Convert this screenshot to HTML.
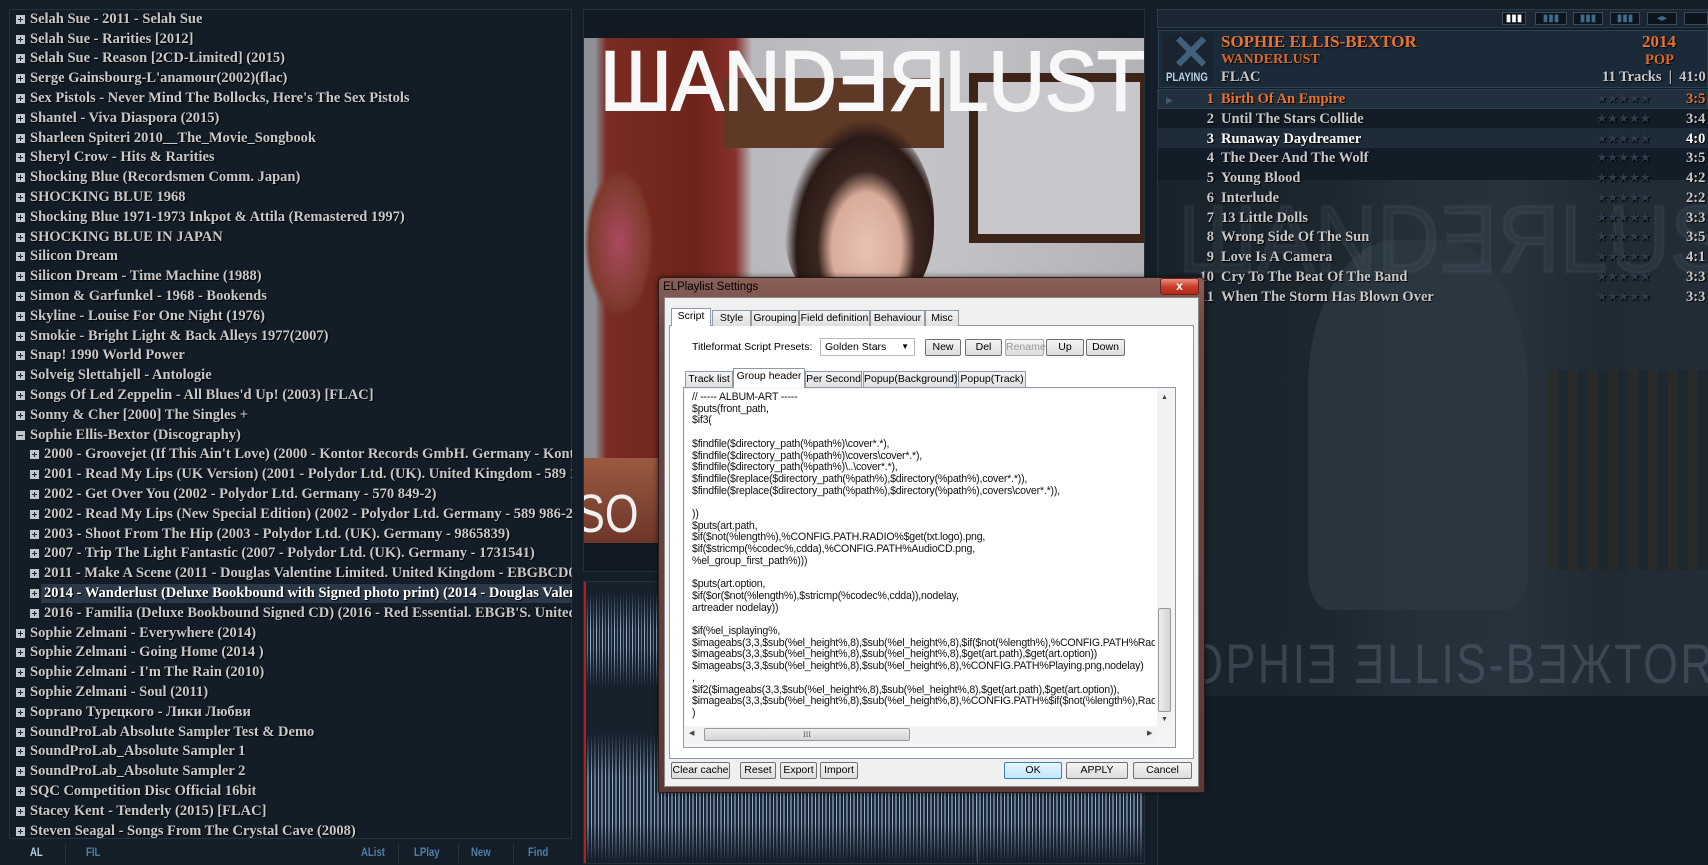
<!DOCTYPE html>
<html><head><meta charset="utf-8"><style>
*{margin:0;padding:0;box-sizing:border-box}
body{width:1708px;height:865px;background:#141e28;position:relative;overflow:hidden;font-family:"Liberation Serif",serif}
.abs{position:absolute}
#left{left:9px;top:9px;width:563px;height:830px;border:1px solid #24323e;background:#131d27;overflow:hidden}
.li{position:absolute;height:20px;line-height:20px;font-weight:bold;font-size:14.5px;color:#c8c8c8;white-space:nowrap;text-shadow:1px 1px 1px #000}
.li .b{display:inline-block;width:9px;height:9px;background:#bfc6cc;margin-right:5px;vertical-align:-1px;position:relative}
.li .b:before{content:"";position:absolute;left:2px;top:4px;width:5px;height:1px;background:#223}
.li .b:after{content:"";position:absolute;left:4px;top:2px;width:1px;height:5px;background:#223}
.li .m:after{display:none}
.bb{position:absolute;top:845px;font-family:"Liberation Sans",sans-serif;font-weight:bold;font-size:12px;color:#4e7fa6;transform:scaleX(.8);transform-origin:0 0}
.tr{position:absolute;left:1157px;width:551px;height:20px;line-height:20px;font-weight:bold;font-size:14.5px;color:#c8c8c8;text-shadow:1px 1px 1px #000;white-space:nowrap}
.tr .n{position:absolute;right:494px;}
.tr .t{position:absolute;left:64px}
.tr .s{position:absolute;left:440px;color:#2c3c4a;font-size:11px;letter-spacing:1px}
.tr .d{position:absolute;left:529px}
.dlg{font-family:"Liberation Sans",sans-serif;font-size:11px;color:#000}
.btn{position:absolute;height:17px;border:1px solid #707070;border-radius:2px;background:linear-gradient(#f4f4f4,#dcdcdc);font-size:10.5px;text-align:center;line-height:15px;font-family:"Liberation Sans",sans-serif}
.tab{position:absolute;height:16px;border:1px solid #8e9aa6;border-bottom:none;background:linear-gradient(#f3f3f3,#e0e0e0);font-size:10.5px;line-height:15px;text-align:center}
.code{position:absolute;left:692px;top:392px;font-size:10.6px;line-height:11.7px;white-space:pre;color:#111;font-family:"Liberation Sans",sans-serif;letter-spacing:-0.2px}
</style></head><body>

<!-- LEFT PANEL -->
<div id="left" class="abs"></div>
<div class="abs" style="left:41px;top:584px;width:531px;height:19px;background:#2a3848"></div>
<div class="abs" style="left:10px;top:10px;width:562px;height:828px;overflow:hidden">
<div class="li" style="left:6px;top:-1px"><span class="b"></span>Selah Sue - 2011 - Selah Sue</div>
<div class="li" style="left:6px;top:19px"><span class="b"></span>Selah Sue - Rarities [2012]</div>
<div class="li" style="left:6px;top:38px"><span class="b"></span>Selah Sue - Reason [2CD-Limited] (2015)</div>
<div class="li" style="left:6px;top:58px"><span class="b"></span>Serge Gainsbourg-L'anamour(2002)(flac)</div>
<div class="li" style="left:6px;top:78px"><span class="b"></span>Sex Pistols - Never Mind The Bollocks, Here's The Sex Pistols</div>
<div class="li" style="left:6px;top:98px"><span class="b"></span>Shantel - Viva Diaspora (2015)</div>
<div class="li" style="left:6px;top:118px"><span class="b"></span>Sharleen Spiteri 2010__The_Movie_Songbook</div>
<div class="li" style="left:6px;top:137px"><span class="b"></span>Sheryl Crow - Hits &amp; Rarities</div>
<div class="li" style="left:6px;top:157px"><span class="b"></span>Shocking Blue (Recordsmen Comm. Japan)</div>
<div class="li" style="left:6px;top:177px"><span class="b"></span>SHOCKING BLUE 1968</div>
<div class="li" style="left:6px;top:197px"><span class="b"></span>Shocking Blue 1971-1973 Inkpot &amp; Attila (Remastered 1997)</div>
<div class="li" style="left:6px;top:217px"><span class="b"></span>SHOCKING BLUE IN JAPAN</div>
<div class="li" style="left:6px;top:236px"><span class="b"></span>Silicon Dream</div>
<div class="li" style="left:6px;top:256px"><span class="b"></span>Silicon Dream - Time Machine (1988)</div>
<div class="li" style="left:6px;top:276px"><span class="b"></span>Simon &amp; Garfunkel - 1968 - Bookends</div>
<div class="li" style="left:6px;top:296px"><span class="b"></span>Skyline - Louise For One Night (1976)</div>
<div class="li" style="left:6px;top:316px"><span class="b"></span>Smokie - Bright Light &amp; Back Alleys 1977(2007)</div>
<div class="li" style="left:6px;top:335px"><span class="b"></span>Snap! 1990 World Power</div>
<div class="li" style="left:6px;top:355px"><span class="b"></span>Solveig Slettahjell - Antologie</div>
<div class="li" style="left:6px;top:375px"><span class="b"></span>Songs Of Led Zeppelin - All Blues'd Up! (2003) [FLAC]</div>
<div class="li" style="left:6px;top:395px"><span class="b"></span>Sonny &amp; Cher [2000] The Singles +</div>
<div class="li" style="left:6px;top:415px"><span class="b m"></span>Sophie Ellis-Bextor (Discography)</div>
<div class="li" style="left:20px;top:434px"><span class="b"></span>2000 - Groovejet (If This Ain't Love) (2000 - Kontor Records GmbH. Germany - Kontor</div>
<div class="li" style="left:20px;top:454px"><span class="b"></span>2001 - Read My Lips (UK Version) (2001 - Polydor Ltd. (UK). United Kingdom - 589 174</div>
<div class="li" style="left:20px;top:474px"><span class="b"></span>2002 - Get Over You (2002 - Polydor Ltd. Germany - 570 849-2)</div>
<div class="li" style="left:20px;top:494px"><span class="b"></span>2002 - Read My Lips (New Special Edition) (2002 - Polydor Ltd. Germany - 589 986-2)</div>
<div class="li" style="left:20px;top:514px"><span class="b"></span>2003 - Shoot From The Hip (2003 - Polydor Ltd. (UK). Germany - 9865839)</div>
<div class="li" style="left:20px;top:533px"><span class="b"></span>2007 - Trip The Light Fantastic (2007 - Polydor Ltd. (UK). Germany - 1731541)</div>
<div class="li" style="left:20px;top:553px"><span class="b"></span>2011 - Make A Scene (2011 - Douglas Valentine Limited. United Kingdom - EBGBCD001</div>
<div class="li" style="left:20px;top:573px;color:#fff"><span class="b"></span>2014 - Wanderlust (Deluxe Bookbound with Signed photo print) (2014 - Douglas Valentine</div>
<div class="li" style="left:20px;top:593px"><span class="b"></span>2016 - Familia (Deluxe Bookbound Signed CD) (2016 - Red Essential. EBGB'S. United K</div>
<div class="li" style="left:6px;top:613px"><span class="b"></span>Sophie Zelmani - Everywhere (2014)</div>
<div class="li" style="left:6px;top:632px"><span class="b"></span>Sophie Zelmani - Going Home (2014 )</div>
<div class="li" style="left:6px;top:652px"><span class="b"></span>Sophie Zelmani - I'm The Rain (2010)</div>
<div class="li" style="left:6px;top:672px"><span class="b"></span>Sophie Zelmani - Soul (2011)</div>
<div class="li" style="left:6px;top:692px"><span class="b"></span>Soprano Турецкого - Лики Любви</div>
<div class="li" style="left:6px;top:712px"><span class="b"></span>SoundProLab Absolute Sampler Test &amp; Demo</div>
<div class="li" style="left:6px;top:731px"><span class="b"></span>SoundProLab_Absolute Sampler 1</div>
<div class="li" style="left:6px;top:751px"><span class="b"></span>SoundProLab_Absolute Sampler 2</div>
<div class="li" style="left:6px;top:771px"><span class="b"></span>SQC Competition Disc Official 16bit</div>
<div class="li" style="left:6px;top:791px"><span class="b"></span>Stacey Kent - Tenderly (2015) [FLAC]</div>
<div class="li" style="left:6px;top:811px"><span class="b"></span>Steven Seagal - Songs From The Crystal Cave (2008)</div>
</div>
<div class="bb" style="left:30px;color:#b8d0e6">AL</div>
<div class="abs" style="left:65px;top:843px;width:1px;height:20px;background:#26323e"></div>
<div class="bb" style="left:86px">FIL</div>
<div class="abs" style="left:398px;top:843px;width:1px;height:20px;background:#26323e"></div>
<div class="bb" style="left:361px">AList</div>
<div class="bb" style="left:414px">LPlay</div>
<div class="abs" style="left:458px;top:843px;width:1px;height:20px;background:#26323e"></div>
<div class="bb" style="left:471px">New</div>
<div class="abs" style="left:513px;top:843px;width:1px;height:20px;background:#26323e"></div>
<div class="bb" style="left:528px">Find</div>

<!-- CENTER ART -->
<div class="abs" style="left:583px;top:9px;width:562px;height:563px;border:1px solid #24323e;background:#111a22"></div>
<div class="abs" style="left:584px;top:38px;width:560px;height:505px;overflow:hidden;background:linear-gradient(90deg,#8c8f96 0,#8c8f96 2%,#7a2c22 4%,#6e2419 20%,#86302a 27%,#b9b8bc 30%,#c4c3c7 60%,#b4b2b6 100%)">
 <div class="abs" style="left:140px;top:40px;width:220px;height:70px;background:#5e3a26"></div>
 <div class="abs" style="left:385px;top:35px;width:180px;height:170px;border:9px solid #3d2418;background:#c9c7cb"></div>
 <div class="abs" style="left:0;top:130px;width:70px;height:150px;background:radial-gradient(ellipse,#a94a60 0,#7f3a2c 60%,transparent 70%)"></div>
 <div class="abs" style="left:200px;top:80px;width:150px;height:200px;border-radius:50% 50% 45% 45%;background:radial-gradient(ellipse at 55% 65%,#e8c3b4 0,#d9ab9a 30%,#3a2620 42%,#2a1a16 60%,transparent 70%)"></div>
 <div class="abs" style="left:165px;top:250px;width:240px;height:260px;border-radius:45% 45% 0 0;background:#ece6da"></div>
 <div class="abs" style="left:0;top:420px;width:180px;height:90px;background:linear-gradient(#9a5a40,#6a3428)"></div>
 <div class="abs" style="left:16px;top:-5px;font-family:'Liberation Sans',sans-serif;font-size:84px;color:#f8f8f8;letter-spacing:0px;transform:scaleX(0.93);transform-origin:0 0;white-space:nowrap;-webkit-text-stroke:2px #f8f8f8">ШANDƎЯLUST</div>
 <div class="abs" style="left:-8px;top:445px;font-family:'Liberation Sans',sans-serif;font-size:54px;color:#f0f0f0;transform:scaleX(.8);transform-origin:0 0">SO</div>
</div>

<!-- WAVEFORM -->
<div class="abs" style="left:583px;top:581px;width:562px;height:283px;background:#16212c;border:1px solid #24323e;overflow:hidden">
 <div class="abs" style="left:0;top:10px;width:562px;height:95px;background:repeating-linear-gradient(90deg,rgba(170,195,225,.85) 0 1px,rgba(40,60,85,.3) 1px 3px,rgba(150,175,210,.6) 3px 4px,rgba(30,45,65,.2) 4px 6px);-webkit-mask-image:linear-gradient(transparent,#000 40%,#000 60%,transparent);mask-image:linear-gradient(transparent,#000 40%,#000 60%,transparent)"></div>
 <div class="abs" style="left:0;top:150px;width:562px;height:130px;background:repeating-linear-gradient(90deg,rgba(170,195,225,.85) 0 1px,rgba(40,60,85,.3) 1px 3px,rgba(150,175,210,.6) 3px 5px,rgba(30,45,65,.2) 5px 7px);-webkit-mask-image:linear-gradient(transparent,#000 35%,#000 70%,transparent);mask-image:linear-gradient(transparent,#000 35%,#000 70%,transparent)"></div>
 <div class="abs" style="left:0;top:0;width:2px;height:283px;background:#b02020"></div>
 <div class="abs" style="left:393px;top:0;width:1px;height:283px;background:#b02020"></div>
</div>

<!-- RIGHT PANEL -->
<div class="abs" style="left:1157px;top:9px;width:551px;height:19px;background:#1a2733;border:1px solid #2a3a48"></div>
<div class="abs" style="left:1502px;top:12px;width:24px;height:13px;background:#0d151c;border:1px solid #3a4a58;color:#fff;font-size:10px;line-height:11px;text-align:center;font-family:'Liberation Sans',sans-serif">▮▮▮</div>
<div class="abs" style="left:1535px;top:12px;width:32px;height:13px;background:#0d151c;border:1px solid #3a4a58;color:#3d6c8c;font-size:10px;line-height:11px;text-align:center">▮▮▮</div>
<div class="abs" style="left:1573px;top:12px;width:30px;height:13px;background:#0d151c;border:1px solid #3a4a58;color:#3d6c8c;font-size:10px;line-height:11px;text-align:center">▮▮▮</div>
<div class="abs" style="left:1610px;top:12px;width:30px;height:13px;background:#0d151c;border:1px solid #3a4a58;color:#3d6c8c;font-size:10px;line-height:11px;text-align:center">▮▮▮</div>
<div class="abs" style="left:1647px;top:12px;width:30px;height:13px;background:#0d151c;border:1px solid #3a4a58;color:#3d6c8c;font-size:10px;line-height:11px;text-align:center">◂▸</div>
<div class="abs" style="left:1684px;top:12px;width:24px;height:13px;background:#0d151c;border:1px solid #3a4a58"></div>

<div class="abs" style="left:1157px;top:88px;width:551px;height:777px;background:#131d27;border-left:1px solid #24323e"></div>
<div class="abs" style="left:1158px;top:180px;width:550px;height:516px;overflow:hidden;background:linear-gradient(90deg,#19232c 0,#1c262f 30%,#242f39 45%,#27323c 65%,#202b34 80%,#222d37 100%)">
 <div class="abs" style="left:150px;top:60px;width:220px;height:370px;border-radius:40% 40% 10% 10%;background:#2c3842;opacity:.8"></div>
 <div class="abs" style="left:390px;top:190px;width:160px;height:200px;background:repeating-linear-gradient(90deg,#2c2a24 0 10px,#1b252e 10px 20px);opacity:.7"></div>
 <div class="abs" style="left:20px;top:5px;font-family:'Liberation Sans',sans-serif;font-size:96px;color:rgba(120,140,160,.09);white-space:nowrap;transform:scaleX(.9);transform-origin:0 0;-webkit-text-stroke:3px rgba(120,140,160,.09)">ШANDƎЯLUST</div>
 <div class="abs" style="left:-2px;top:452px;font-family:'Liberation Sans',sans-serif;font-size:56px;line-height:64px;color:rgba(100,115,130,.4);white-space:nowrap;letter-spacing:3px;transform:scaleX(.8);transform-origin:0 0">SOPHIƎ ƎLLIS-BƎЖTOR</div>
</div>

<!-- Header -->
<div class="abs" style="left:1158px;top:30px;width:550px;height:58px;background:#1b2a38;border:1px solid #2d4052"></div>
<div class="abs" style="left:1163px;top:33px;width:50px;height:52px;background:#18242f"></div>
<div class="abs" style="left:1171px;top:30px;font-family:'Liberation Sans',sans-serif;font-size:48px;font-weight:bold;color:#41607c;line-height:48px">✕</div>
<div class="abs" style="left:1166px;top:70px;font-family:'Liberation Sans',sans-serif;font-size:12px;font-weight:bold;color:#b8d0e6;transform:scaleX(.8);transform-origin:0 0">PLAYING</div>
<div class="abs" style="left:1221px;top:32px;font-weight:bold;font-size:17px;color:#e8732e;text-shadow:1px 1px 1px #000">SOPHIE ELLIS-BEXTOR</div>
<div class="abs" style="left:1221px;top:52px;font-weight:bold;font-size:14px;color:#d8692a;text-shadow:1px 1px 1px #000">WANDERLUST</div>
<div class="abs" style="left:1221px;top:69px;font-weight:bold;font-size:14.5px;color:#c8c8c8;text-shadow:1px 1px 1px #000">FLAC</div>
<div class="abs" style="left:1642px;top:32px;font-weight:bold;font-size:17px;color:#e8732e;text-shadow:1px 1px 1px #000">2014</div>
<div class="abs" style="left:1645px;top:52px;font-weight:bold;font-size:14.5px;color:#d8692a;text-shadow:1px 1px 1px #000">POP</div>
<div class="abs" style="left:1602px;top:69px;font-weight:bold;font-size:14.5px;color:#c8c8c8;text-shadow:1px 1px 1px #000;white-space:nowrap">11 Tracks &nbsp;|&nbsp; 41:0</div>

<div class="abs" style="left:1158px;top:89px;width:550px;height:20px;background:#21303f;border:1px solid #2e4254"></div>
<div class="abs" style="left:1158px;top:128px;width:550px;height:20px;background:#1e2b38"></div>
<div class="abs" style="left:1166px;top:90px;color:#4a5a6a;font-size:9px;line-height:20px">▶</div>
<div class="tr" style="top:89px;color:#e8732e"><span class="n">1</span><span class="t">Birth Of An Empire</span><span class="s">★★★★★</span><span class="d">3:5</span></div>
<div class="tr" style="top:109px"><span class="n">2</span><span class="t">Until The Stars Collide</span><span class="s">★★★★★</span><span class="d">3:4</span></div>
<div class="tr" style="top:129px;color:#fff"><span class="n">3</span><span class="t">Runaway Daydreamer</span><span class="s">★★★★★</span><span class="d">4:0</span></div>
<div class="tr" style="top:148px"><span class="n">4</span><span class="t">The Deer And The Wolf</span><span class="s">★★★★★</span><span class="d">3:5</span></div>
<div class="tr" style="top:168px"><span class="n">5</span><span class="t">Young Blood</span><span class="s">★★★★★</span><span class="d">4:2</span></div>
<div class="tr" style="top:188px"><span class="n">6</span><span class="t">Interlude</span><span class="s">★★★★★</span><span class="d">2:2</span></div>
<div class="tr" style="top:208px"><span class="n">7</span><span class="t">13 Little Dolls</span><span class="s">★★★★★</span><span class="d">3:3</span></div>
<div class="tr" style="top:227px"><span class="n">8</span><span class="t">Wrong Side Of The Sun</span><span class="s">★★★★★</span><span class="d">3:5</span></div>
<div class="tr" style="top:247px"><span class="n">9</span><span class="t">Love Is A Camera</span><span class="s">★★★★★</span><span class="d">4:1</span></div>
<div class="tr" style="top:267px"><span class="n">10</span><span class="t">Cry To The Beat Of The Band</span><span class="s">★★★★★</span><span class="d">3:3</span></div>
<div class="tr" style="top:287px"><span class="n">11</span><span class="t">When The Storm Has Blown Over</span><span class="s">★★★★★</span><span class="d">3:3</span></div>

<!-- DIALOG -->
<div class="dlg abs" style="left:658px;top:277px;width:547px;height:516px;border:1px solid #2a1a18;border-radius:5px 5px 2px 2px;background:linear-gradient(#8a6058,#6e4844 10%,#5a3a38 100%);box-shadow:0 0 6px rgba(0,0,0,.6)"></div>
<div class="dlg abs" style="left:663px;top:281px;font-size:11.5px;color:#000">ELPlaylist Settings</div>
<div class="abs" style="left:1160px;top:278px;width:39px;height:17px;border:1px solid #6a2020;border-radius:3px;background:linear-gradient(#e89080,#c8402c 50%,#b02818);color:#fff;font:bold 12px 'Liberation Sans',sans-serif;text-align:center;line-height:15px">x</div>
<div class="dlg abs" style="left:664px;top:297px;width:535px;height:490px;background:#f0f0f0;border:1px solid #888"></div>
<div class="dlg abs" style="left:669px;top:325px;width:525px;height:434px;background:#fff;border:1px solid #8e9aa6"></div>
<div class="dlg tab" style="left:671px;top:308px;width:40px;height:18px;background:#fff;border-color:#8e9aa6;z-index:2">Script</div>
<div class="dlg tab" style="left:712px;top:310px;width:39px">Style</div>
<div class="dlg tab" style="left:751px;top:310px;width:48px">Grouping</div>
<div class="dlg tab" style="left:799px;top:310px;width:71px">Field definition</div>
<div class="dlg tab" style="left:870px;top:310px;width:55px">Behaviour</div>
<div class="dlg tab" style="left:925px;top:310px;width:34px">Misc</div>
<div class="dlg abs" style="left:692px;top:341px;font-size:10.5px">Titleformat Script Presets:</div>
<div class="dlg abs" style="left:820px;top:338px;width:95px;height:18px;border:1px solid #bbb;background:#fff;font-size:10.5px;line-height:16px;padding-left:4px">Golden Stars<span style="position:absolute;right:5px;font-size:8px">▼</span></div>
<div class="btn" style="left:925px;top:339px;width:36px">New</div>
<div class="btn" style="left:965px;top:339px;width:37px">Del</div>
<div class="btn" style="left:1005px;top:339px;width:39px;color:#999;border-color:#aaa">Rename</div>
<div class="btn" style="left:1046px;top:339px;width:38px">Up</div>
<div class="btn" style="left:1086px;top:339px;width:39px">Down</div>
<div class="dlg tab" style="left:685px;top:371px;width:48px">Track list</div>
<div class="dlg tab" style="left:733px;top:368px;width:72px;height:20px;background:#fff;z-index:2">Group header</div>
<div class="dlg tab" style="left:805px;top:371px;width:57px">Per Second</div>
<div class="dlg tab" style="left:863px;top:371px;width:94px">Popup(Background)</div>
<div class="dlg tab" style="left:958px;top:371px;width:68px">Popup(Track)</div>
<div class="abs" style="left:683px;top:387px;width:493px;height:361px;border:1px solid #8e9aa6;background:#f4f4f4"></div>
<div class="abs" style="left:685px;top:389px;width:472px;height:337px;background:#fff;overflow:hidden"></div>
<div class="abs" style="left:1157px;top:389px;width:16px;height:337px;background:#f2f2f2"></div>
<div class="abs" style="left:1158px;top:608px;width:13px;height:104px;border:1px solid #999;border-radius:2px;background:linear-gradient(90deg,#eee,#d4d4d4)"></div>
<div class="abs" style="left:1161px;top:393px;font-size:7px;color:#444">▲</div>
<div class="abs" style="left:1161px;top:715px;font-size:7px;color:#444">▼</div>
<div class="abs" style="left:685px;top:727px;width:472px;height:15px;background:#f2f2f2"></div>
<div class="abs" style="left:704px;top:728px;width:206px;height:13px;border:1px solid #999;border-radius:2px;background:linear-gradient(#eee,#d4d4d4);font-size:8px;text-align:center;line-height:11px;color:#555">III</div>
<div class="abs" style="left:689px;top:729px;font-size:7px;color:#444">◀</div>
<div class="abs" style="left:1147px;top:729px;font-size:7px;color:#444">▶</div>
<div class="code" style="width:463px;overflow:hidden">// ----- ALBUM-ART -----
$puts(front_path,
$if3(

$findfile($directory_path(%path%)\cover*.*),
$findfile($directory_path(%path%)\covers\cover*.*),
$findfile($directory_path(%path%)\..\cover*.*),
$findfile($replace($directory_path(%path%),$directory(%path%),cover*.*)),
$findfile($replace($directory_path(%path%),$directory(%path%),covers\cover*.*)),

))
$puts(art.path,
$if($not(%length%),%CONFIG.PATH.RADIO%$get(txt.logo).png,
$if($stricmp(%codec%,cdda),%CONFIG.PATH%AudioCD.png,
%el_group_first_path%)))

$puts(art.option,
$if($or($not(%length%),$stricmp(%codec%,cdda)),nodelay,
artreader nodelay))

$if(%el_isplaying%,
$imageabs(3,3,$sub(%el_height%,8),$sub(%el_height%,8),$if($not(%length%),%CONFIG.PATH%Radi
$imageabs(3,3,$sub(%el_height%,8),$sub(%el_height%,8),$get(art.path),$get(art.option))
$imageabs(3,3,$sub(%el_height%,8),$sub(%el_height%,8),%CONFIG.PATH%Playing.png,nodelay)
,
$if2($imageabs(3,3,$sub(%el_height%,8),$sub(%el_height%,8),$get(art.path),$get(art.option)),
$imageabs(3,3,$sub(%el_height%,8),$sub(%el_height%,8),%CONFIG.PATH%$if($not(%length%),Radi
)</div>
<div class="btn" style="left:671px;top:762px;width:59px">Clear cache</div>
<div class="btn" style="left:740px;top:762px;width:36px">Reset</div>
<div class="btn" style="left:780px;top:762px;width:37px">Export</div>
<div class="btn" style="left:820px;top:762px;width:38px">Import</div>
<div class="btn" style="left:1004px;top:762px;width:58px;border-color:#3c7fb1;background:linear-gradient(#eaf6fd,#bee6fd)">OK</div>
<div class="btn" style="left:1066px;top:762px;width:62px">APPLY</div>
<div class="btn" style="left:1133px;top:762px;width:59px">Cancel</div>
</body></html>
